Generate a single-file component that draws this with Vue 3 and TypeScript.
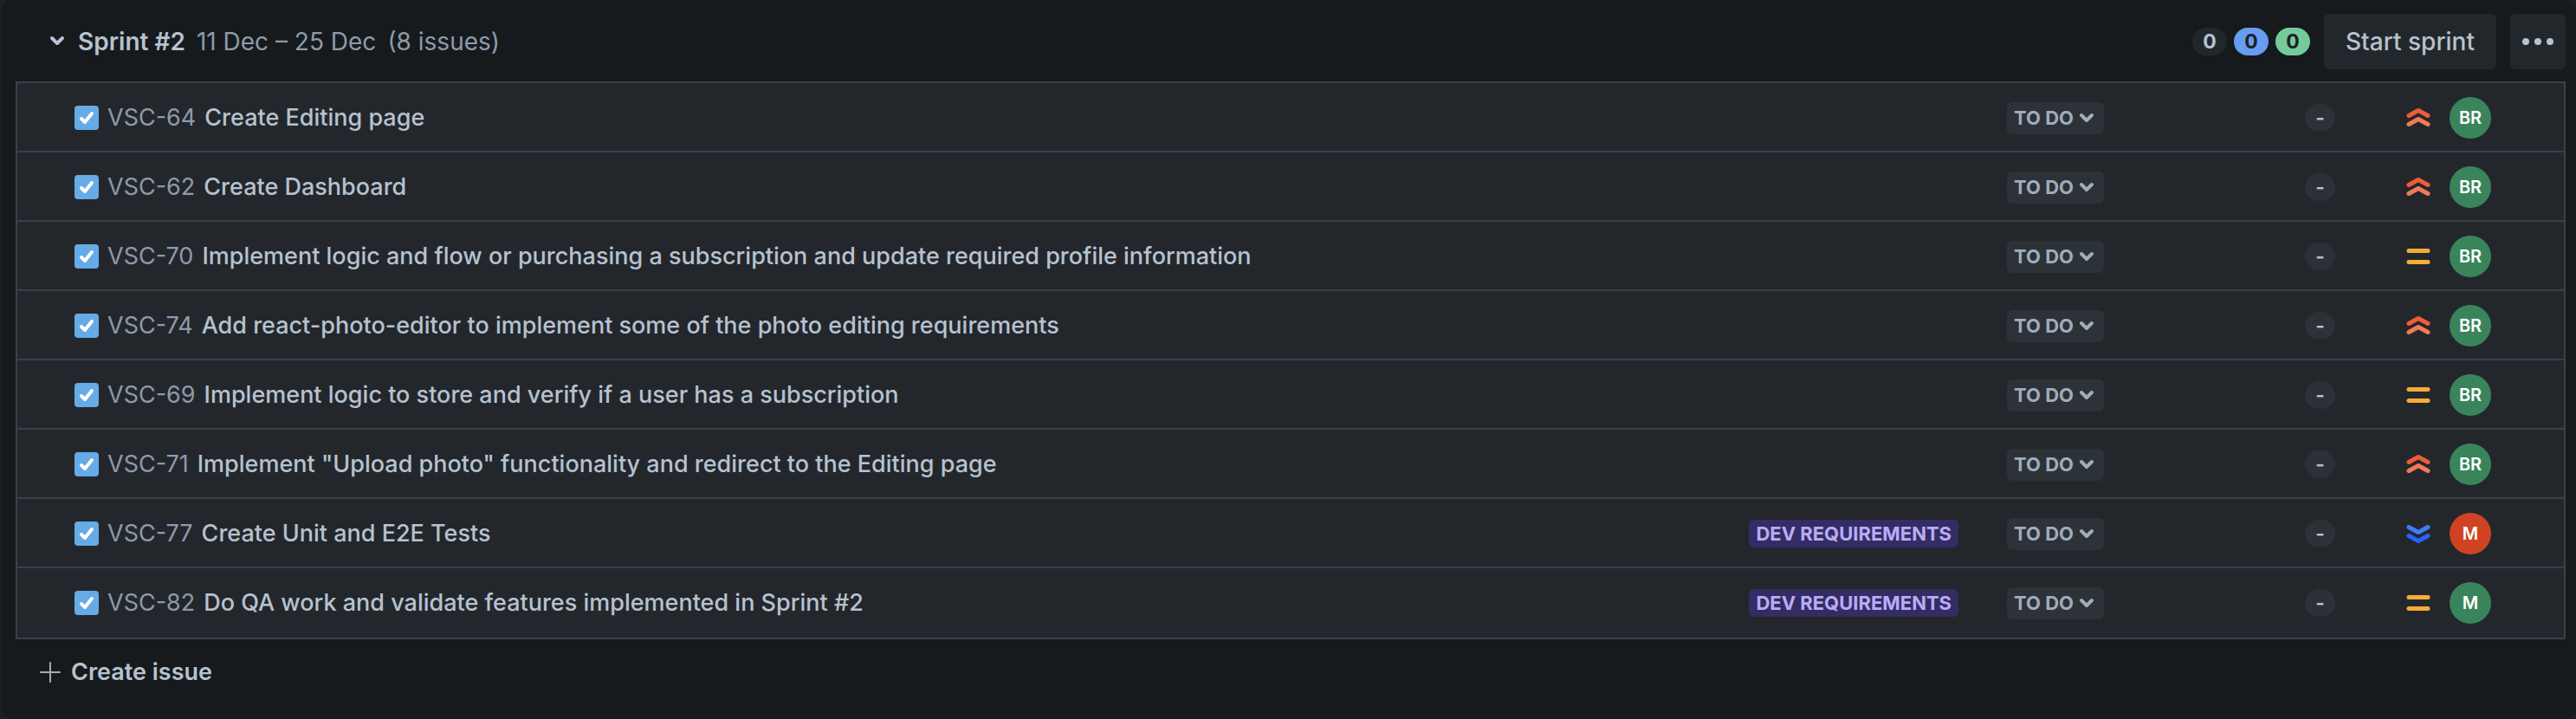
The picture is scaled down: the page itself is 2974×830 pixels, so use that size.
<script setup lang="ts">
type Priority = 'highest' | 'medium' | 'lowest'

interface Issue {
  key: string
  title: string
  epic?: string
  priority: Priority
  initials: string
  tone: 'green' | 'red'
}

interface Count {
  label: string
  tone: 'grey' | 'blue' | 'green'
}

const counts: Count[] = [
  { label: 'To do', tone: 'grey' },
  { label: 'In progress', tone: 'blue' },
  { label: 'Done', tone: 'green' },
]

const issues: Issue[] = [
  { key: 'VSC-64', title: 'Create Editing page', priority: 'highest', initials: 'BR', tone: 'green' },
  { key: 'VSC-62', title: 'Create Dashboard', priority: 'highest', initials: 'BR', tone: 'green' },
  { key: 'VSC-70', title: 'Implement logic and flow or purchasing a subscription and update required profile information', priority: 'medium', initials: 'BR', tone: 'green' },
  { key: 'VSC-74', title: 'Add react-photo-editor to implement some of the photo editing requirements', priority: 'highest', initials: 'BR', tone: 'green' },
  { key: 'VSC-69', title: 'Implement logic to store and verify if a user has a subscription', priority: 'medium', initials: 'BR', tone: 'green' },
  { key: 'VSC-71', title: 'Implement "Upload photo" functionality and redirect to the Editing page', priority: 'highest', initials: 'BR', tone: 'green' },
  { key: 'VSC-77', title: 'Create Unit and E2E Tests', epic: 'DEV REQUIREMENTS', priority: 'lowest', initials: 'M', tone: 'red' },
  { key: 'VSC-82', title: 'Do QA work and validate features implemented in Sprint #2', epic: 'DEV REQUIREMENTS', priority: 'medium', initials: 'M', tone: 'green' },
]
</script>

<template>
  <section class="sprint">
    <header class="head">
      <button class="toggle" type="button" aria-expanded="true">
        <svg class="toggle-icon" viewBox="0 0 20 20" aria-hidden="true">
          <path d="M4 6l6 6 6-6" />
        </svg>
        <span class="name">Sprint #2</span>
      </button>
      <span class="dates">11 Dec – 25 Dec</span>
      <span class="total">(8 issues)</span>
      <div class="counts">
        <span v-for="c in counts" :key="c.tone" class="count" :class="c.tone" :aria-label="c.label">0</span>
      </div>
      <button class="start" type="button">Start sprint</button>
      <button class="more" type="button" aria-label="Sprint actions">
        <svg viewBox="0 0 40 10" aria-hidden="true">
          <circle cx="6" cy="5" r="4" />
          <circle cx="20" cy="5" r="4" />
          <circle cx="34" cy="5" r="4" />
        </svg>
      </button>
    </header>

    <ul class="list">
      <li v-for="issue in issues" :key="issue.key" class="row">
        <svg class="type" viewBox="0 0 28 28" aria-hidden="true">
          <rect width="28" height="28" rx="4" />
          <path d="M8 15l4 4 8-10" />
        </svg>
        <a class="key" href="#">{{ issue.key }}</a>
        <span class="title">{{ issue.title }}</span>
        <span v-if="issue.epic" class="epic">{{ issue.epic }}</span>
        <div class="status-cell">
          <button class="status" type="button">
            TO DO
            <svg viewBox="0 0 16 16" aria-hidden="true">
              <path d="M2 5l6 6 6-6" />
            </svg>
          </button>
        </div>
        <span class="estimate">-</span>
        <svg class="priority" :class="issue.priority" viewBox="0 0 32 32" aria-hidden="true">
          <template v-if="issue.priority === 'highest'">
            <path class="second" d="M5 23.5l11-6 11 6" />
            <path class="first" d="M5 13.5l11-6 11 6" />
          </template>
          <template v-else-if="issue.priority === 'medium'">
            <path class="first" d="M5 9.5h22" />
            <path class="first" d="M5 22.5h22" />
          </template>
          <template v-else>
            <path class="first" d="M5 8.5l11 6 11-6" />
            <path class="second" d="M5 18.5l11 6 11-6" />
          </template>
        </svg>
        <span class="avatar" :class="issue.tone">{{ issue.initials }}</span>
      </li>
    </ul>

    <button class="create" type="button">
      <svg viewBox="0 0 24 24" aria-hidden="true">
        <path d="M12 1v22M1 12h22" />
      </svg>
      Create issue
    </button>
  </section>
</template>

<style>
body {
  background: #1d2125;
}
</style>

<style scoped>
.sprint {
  box-sizing: border-box;
  min-height: 828px;
  margin-left: 2px;
  padding: 0 12px 16px 16px;
  border-radius: 12px;
  background: #161a1d;
  color: #b6c2cf;
  font-family: Inter, "Liberation Sans", sans-serif;
  font-size: 28px;
  line-height: 40px;
}

button {
  margin: 0;
  padding: 0;
  border: 0;
  background: none;
  color: inherit;
  font: inherit;
  cursor: pointer;
}

svg {
  flex: none;
  fill: none;
  stroke: currentColor;
  stroke-linecap: round;
  stroke-linejoin: round;
}

.head {
  display: flex;
  align-items: center;
  height: 94px;
  padding-top: 2px;
  box-sizing: border-box;
}

.toggle {
  display: flex;
  align-items: center;
  gap: 14px;
  margin-left: 38px;
  font-weight: 600;
}

.toggle-icon {
  width: 20px;
  height: 20px;
  stroke-width: 4;
}

.dates,
.total {
  margin-left: 13px;
  color: #8c9bab;
}

.counts {
  display: flex;
  gap: 8px;
  margin-left: auto;
}

.count {
  min-width: 40px;
  border-radius: 16px;
  color: #1d2125;
  font-size: 23px;
  font-weight: 700;
  line-height: 32px;
  text-align: center;
}

.count.grey {
  background: #22272b;
  color: #b6c2cf;
}

.count.blue {
  background: #669df1;
}

.count.green {
  background: #73cb9b;
}

.start,
.more {
  height: 64px;
  margin-left: 16px;
  border-radius: 6px;
  background: #22272b;
  font-weight: 500;
}

.start {
  padding: 0 25px;
}

.more {
  display: flex;
  align-items: center;
  justify-content: center;
  width: 64px;
}

.more svg {
  width: 40px;
  height: 10px;
  fill: currentColor;
  stroke: none;
}

.list {
  margin: 0;
  padding: 0;
  border: 2px solid #38414a;
  list-style: none;
}

.row {
  display: flex;
  align-items: center;
  box-sizing: border-box;
  height: 80px;
  padding: 2px 84px 0 66px;
  border-bottom: 2px solid #38414a;
  background: #23272c;
  font-size: 27px;
}

.row:last-child {
  border-bottom-color: transparent;
}

.type {
  width: 28px;
  height: 28px;
  stroke: #ffffff;
  stroke-width: 4;
}

.type rect {
  fill: #66abe5;
  stroke: none;
}

.key {
  margin-left: 10px;
  color: #8c9bab;
  text-decoration: none;
}

.title {
  flex: 1;
  margin-left: 10px;
  font-weight: 450;
}

.epic {
  padding: 0 8px;
  border-radius: 6px;
  background: #352c63;
  color: #b8acf6;
  font-size: 22px;
  font-weight: 750;
  line-height: 32px;
}

.status-cell {
  width: 344px;
  margin-left: 56px;
}

.status {
  display: flex;
  align-items: center;
  gap: 7px;
  height: 37px;
  padding: 0 12px 0 8px;
  border-radius: 6px;
  background: #2c3238;
  color: #9fadbc;
  font-size: 22px;
  font-weight: 750;
}

.status svg {
  width: 16px;
  height: 16px;
  stroke-width: 4;
}

.estimate {
  width: 35px;
  margin-right: 80px;
  border-radius: 16px;
  background: #2c3037;
  font-size: 23px;
  font-weight: 600;
  line-height: 32px;
  text-align: center;
}

.priority {
  width: 32px;
  height: 32px;
  margin-right: 20px;
  stroke-width: 5;
}

.highest .first {
  stroke: #f15b38;
}

.highest .second {
  stroke: #f27a59;
}

.medium .first {
  stroke: #f5ac38;
}

.lowest .first {
  stroke: #3f7ff6;
}

.lowest .second {
  stroke: #2962ff;
}

.avatar {
  width: 48px;
  border-radius: 24px;
  color: #ffffff;
  font-size: 20px;
  font-weight: 600;
  line-height: 48px;
  text-align: center;
}

.avatar.green {
  background: #3a845b;
}

.avatar.red {
  background: #cf4323;
}

.create {
  display: flex;
  align-items: center;
  gap: 12px;
  height: 76px;
  margin-left: 28px;
  font-size: 27px;
  font-weight: 600;
}

.create svg {
  width: 24px;
  height: 24px;
  stroke: #9fadbc;
  stroke-width: 2;
}
</style>
